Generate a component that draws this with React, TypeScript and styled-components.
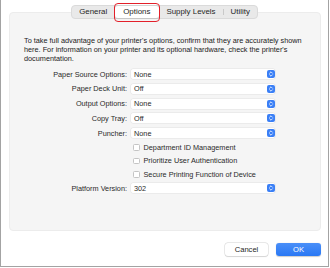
import React from 'react';
import styled, {createGlobalStyle} from 'styled-components';

const GlobalStyle = createGlobalStyle`
	html, body {
		margin: 0;
		padding: 0;
		background: #ffffff;
	}
	body {
		font-family: 'Liberation Sans', Arial, sans-serif;
		color: #222222;
	}
`;

const tabs = ['General', 'Options', 'Supply Levels', 'Utility'];
const selected = 1;

const selects = [
	{label: 'Paper Source Options:', value: 'None'},
	{label: 'Paper Deck Unit:', value: 'Off'},
	{label: 'Output Options:', value: 'None'},
	{label: 'Copy Tray:', value: 'Off'},
	{label: 'Puncher:', value: 'None'},
];

const checks = [
	'Department ID Management',
	'Prioritize User Authentication',
	'Secure Printing Function of Device',
];

const Stepper = () => (
	<StepperBox>
		<svg width='8' height='8' viewBox='0 0 8 8'>
			<path d='M2.6 3.2 L4 1.8 L5.4 3.2' fill='none' stroke='#fff' strokeWidth='0.8' strokeLinecap='round' strokeLinejoin='round' />
			<path d='M2.6 4.8 L4 6.2 L5.4 4.8' fill='none' stroke='#fff' strokeWidth='0.8' strokeLinecap='round' strokeLinejoin='round' />
		</svg>
	</StepperBox>
);

const App = () => {
	return (
		<>
			<GlobalStyle />
			<Window>
				<Panel>
					<TabBar>
						{tabs.map((t, i) => (
							<Tab key={t} $active={i === selected} $divider={i > 0 && i !== selected && i - 1 !== selected}>
								{t}
							</Tab>
						))}
					</TabBar>
					<Intro>
						To take full advantage of your printer's options, confirm that they are accurately shown
						here. For information on your printer and its optional hardware, check the printer's
						documentation.
					</Intro>
					<Form>
						{selects.map((s) => (
							<Row key={s.label} $h={14.8}>
								<Label>{s.label}</Label>
								<Select>
									<span>{s.value}</span>
									<Stepper />
								</Select>
							</Row>
						))}
						{checks.map((c) => (
							<Row key={c} $h={13.5}>
								<span />
								<CheckLine>
									<Box />
									{c}
								</CheckLine>
							</Row>
						))}
						<Row $h={14.8}>
							<Label>Platform Version:</Label>
							<Select>
								<span>302</span>
								<Stepper />
							</Select>
						</Row>
					</Form>
				</Panel>
				<Footer>
					<Button>Cancel</Button>
					<Button $primary>OK</Button>
				</Footer>
			</Window>
		</>
	);
};

export default App;

const Window = styled.div`
	width: 329px;
	height: 267px;
	box-sizing: border-box;
	border: 1px solid #a3a3a3;
	border-top: none;
	padding-top: 12px;
	background: #ffffff;
`;

const Panel = styled.div`
	margin-left: 8px;
	width: 312px;
	height: 219px;
	box-sizing: border-box;
	background: #f5f5f5;
	border: 1px solid #ececec;
	border-radius: 4px;
	padding: 0 15px 0 14px;
`;

const TabBar = styled.div`
	display: flex;
	align-items: center;
	width: fit-content;
	height: 14px;
	margin: -8px auto 0;
	background: #e9e9e9;
	border: 1px solid #dadada;
	border-radius: 4px;
	box-sizing: border-box;
`;

const Tab = styled.div<{$active?: boolean; $divider?: boolean}>`
	position: relative;
	height: 12px;
	line-height: 12px;
	padding: 0 ${(p) => (p.$active ? '8.5px' : '7.5px')};
	font-size: 7.9px;
	color: #262626;
	border-radius: 3px;
	background: ${(p) => (p.$active ? '#ffffff' : 'transparent')};
	box-shadow: ${(p) => (p.$active ? '0 0 0 0.5px #d0d0d0, 0 0.5px 1px rgba(0,0,0,0.15)' : 'none')};

	&::before {
		content: '';
		display: ${(p) => (p.$divider ? 'block' : 'none')};
		position: absolute;
		left: 0;
		top: 3px;
		height: 6px;
		width: 1px;
		background: #c9c9c9;
	}

	&::after {
		content: '';
		display: ${(p) => (p.$active ? 'block' : 'none')};
		position: absolute;
		left: -1px;
		right: -1px;
		top: -3px;
		bottom: -4px;
		border: 1.5px solid #e3202a;
		border-radius: 4px;
	}
`;

const Intro = styled.p`
	margin: 17px 0 0;
	font-size: 7.3px;
	line-height: 9.2px;
	color: #222222;
`;

const Form = styled.div`
	margin-top: 3px;
	display: grid;
	grid-template-columns: 103px 144px;
	column-gap: 4px;
`;

const Row = styled.div<{$h: number}>`
	display: contents;

	& > * {
		height: ${(p) => p.$h}px;
	}
`;

const Label = styled.div`
	display: flex;
	align-items: center;
	justify-content: flex-end;
	font-size: 7.3px;
	color: #2a2a2a;
`;

const Select = styled.div`
	align-self: center;
	display: flex;
	align-items: center;
	justify-content: space-between;
	height: 10px !important;
	box-sizing: border-box;
	padding: 0 0.5px 0 3px;
	background: #ffffff;
	border-radius: 2px;
	box-shadow: 0 0 0 0.5px #e2e2e2;
	font-size: 7.3px;
	color: #2a2a2a;
`;

const StepperBox = styled.div`
	width: 8px;
	height: 8px;
	border-radius: 2px;
	background: #3a7ff6;
	display: flex;
`;

const CheckLine = styled.div`
	display: flex;
	align-items: center;
	gap: 4px;
	padding-left: 2px;
	font-size: 7.3px;
	color: #2a2a2a;
`;

const Box = styled.div`
	width: 6.5px;
	height: 6.5px;
	box-sizing: border-box;
	background: #ffffff;
	border: 0.6px solid #c4c4c4;
	border-radius: 1.5px;
`;

const Footer = styled.div`
	display: flex;
	justify-content: flex-end;
	gap: 8px;
	padding-right: 7px;
	margin-top: 12px;
`;

const Button = styled.div<{$primary?: boolean}>`
	width: ${(p) => (p.$primary ? '45px' : '43px')};
	height: 12.7px;
	box-sizing: border-box;
	display: flex;
	align-items: center;
	justify-content: center;
	border-radius: 3px;
	font-size: 7.6px;
	color: ${(p) => (p.$primary ? '#ffffff' : '#262626')};
	background: ${(p) => (p.$primary ? 'linear-gradient(#4a8ff8, #2a78f4)' : '#ffffff')};
	box-shadow: ${(p) => (p.$primary ? '0 0.5px 1px rgba(0,0,0,0.2)' : '0 0 0 0.5px #d3d3d3, 0 0.5px 1px rgba(0,0,0,0.15)')};
`;
